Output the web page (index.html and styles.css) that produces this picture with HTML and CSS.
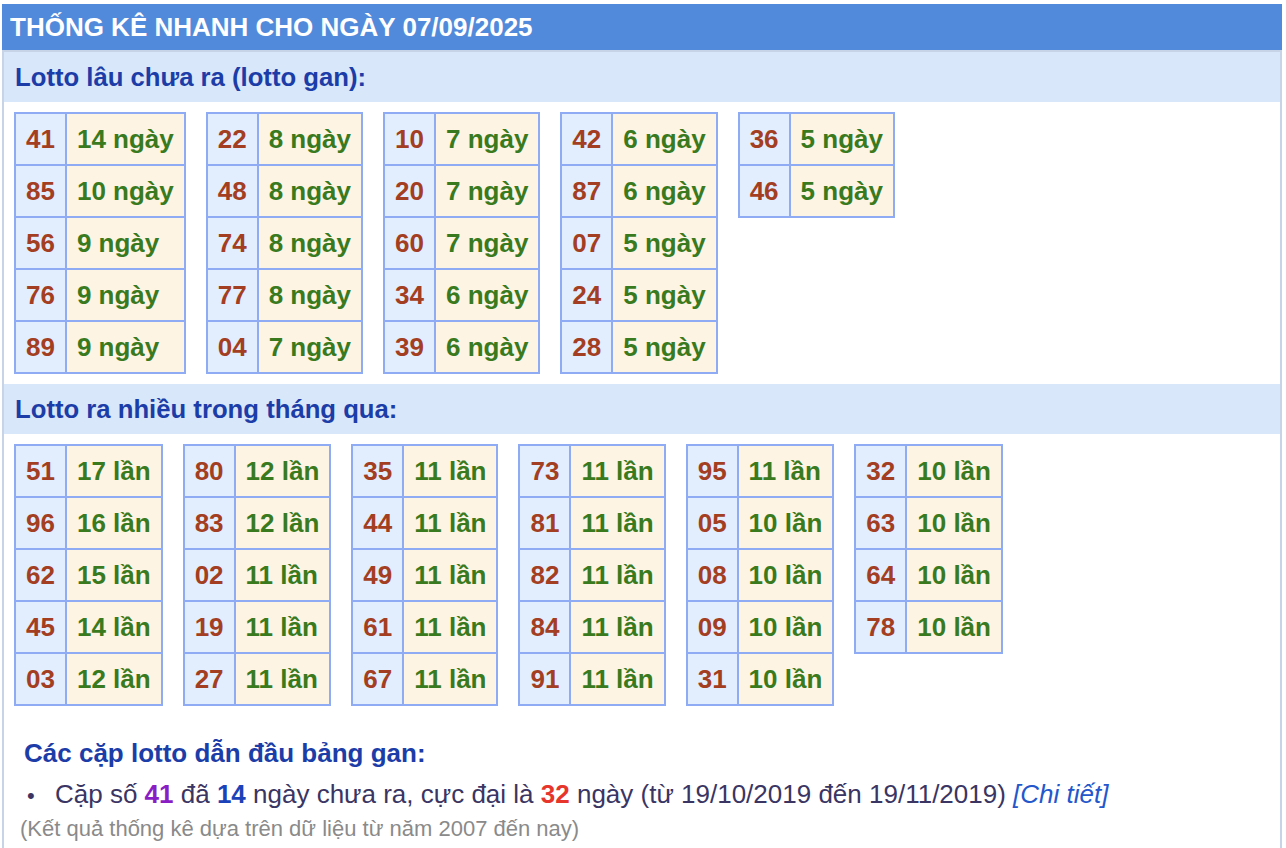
FILE: index.html
```html
<!DOCTYPE html>
<html lang="vi">
<head>
<meta charset="utf-8">
<title>Thống kê nhanh</title>
<link rel="stylesheet" href="styles.css">
</head>
<body>
<div class="wrap">
  <div class="title">THỐNG KÊ NHANH CHO NGÀY 07/09/2025</div>
  <div class="box">
    <div class="sec-head">Lotto lâu chưa ra (lotto gan):</div>
    <div class="tables">
      <table class="lt"><tr><td class="n">41</td><td class="v">14 ngày</td></tr><tr><td class="n">85</td><td class="v">10 ngày</td></tr><tr><td class="n">56</td><td class="v">9 ngày</td></tr><tr><td class="n">76</td><td class="v">9 ngày</td></tr><tr><td class="n">89</td><td class="v">9 ngày</td></tr></table>
      <table class="lt"><tr><td class="n">22</td><td class="v">8 ngày</td></tr><tr><td class="n">48</td><td class="v">8 ngày</td></tr><tr><td class="n">74</td><td class="v">8 ngày</td></tr><tr><td class="n">77</td><td class="v">8 ngày</td></tr><tr><td class="n">04</td><td class="v">7 ngày</td></tr></table>
      <table class="lt"><tr><td class="n">10</td><td class="v">7 ngày</td></tr><tr><td class="n">20</td><td class="v">7 ngày</td></tr><tr><td class="n">60</td><td class="v">7 ngày</td></tr><tr><td class="n">34</td><td class="v">6 ngày</td></tr><tr><td class="n">39</td><td class="v">6 ngày</td></tr></table>
      <table class="lt"><tr><td class="n">42</td><td class="v">6 ngày</td></tr><tr><td class="n">87</td><td class="v">6 ngày</td></tr><tr><td class="n">07</td><td class="v">5 ngày</td></tr><tr><td class="n">24</td><td class="v">5 ngày</td></tr><tr><td class="n">28</td><td class="v">5 ngày</td></tr></table>
      <table class="lt"><tr><td class="n">36</td><td class="v">5 ngày</td></tr><tr><td class="n">46</td><td class="v">5 ngày</td></tr></table>
    </div>
    <div class="sec-head">Lotto ra nhiều trong tháng qua:</div>
    <div class="tables">
      <table class="lt"><tr><td class="n">51</td><td class="v">17 lần</td></tr><tr><td class="n">96</td><td class="v">16 lần</td></tr><tr><td class="n">62</td><td class="v">15 lần</td></tr><tr><td class="n">45</td><td class="v">14 lần</td></tr><tr><td class="n">03</td><td class="v">12 lần</td></tr></table>
      <table class="lt"><tr><td class="n">80</td><td class="v">12 lần</td></tr><tr><td class="n">83</td><td class="v">12 lần</td></tr><tr><td class="n">02</td><td class="v">11 lần</td></tr><tr><td class="n">19</td><td class="v">11 lần</td></tr><tr><td class="n">27</td><td class="v">11 lần</td></tr></table>
      <table class="lt"><tr><td class="n">35</td><td class="v">11 lần</td></tr><tr><td class="n">44</td><td class="v">11 lần</td></tr><tr><td class="n">49</td><td class="v">11 lần</td></tr><tr><td class="n">61</td><td class="v">11 lần</td></tr><tr><td class="n">67</td><td class="v">11 lần</td></tr></table>
      <table class="lt"><tr><td class="n">73</td><td class="v">11 lần</td></tr><tr><td class="n">81</td><td class="v">11 lần</td></tr><tr><td class="n">82</td><td class="v">11 lần</td></tr><tr><td class="n">84</td><td class="v">11 lần</td></tr><tr><td class="n">91</td><td class="v">11 lần</td></tr></table>
      <table class="lt"><tr><td class="n">95</td><td class="v">11 lần</td></tr><tr><td class="n">05</td><td class="v">10 lần</td></tr><tr><td class="n">08</td><td class="v">10 lần</td></tr><tr><td class="n">09</td><td class="v">10 lần</td></tr><tr><td class="n">31</td><td class="v">10 lần</td></tr></table>
      <table class="lt"><tr><td class="n">32</td><td class="v">10 lần</td></tr><tr><td class="n">63</td><td class="v">10 lần</td></tr><tr><td class="n">64</td><td class="v">10 lần</td></tr><tr><td class="n">78</td><td class="v">10 lần</td></tr></table>
    </div>
    <div class="pairs">
      <div class="pairs-head">Các cặp lotto dẫn đầu bảng gan:</div>
      <ul class="pairs-list">
        <li>Cặp số <b class="c-purple">41</b> đã <b class="c-blue">14</b> ngày chưa ra, cực đại là <b class="c-red">32</b> ngày (từ 19/10/2019 đến 19/11/2019) <a class="detail" href="#">[Chi tiết]</a></li>
      </ul>
    </div>
    <div class="note">(Kết quả thống kê dựa trên dữ liệu từ năm 2007 đến nay)</div>
  </div>
</div>
</body>
</html>
```
FILE: styles.css
```css
html, body {
  margin: 0;
  padding: 0;
  background: #fff;
  font-family: "Liberation Sans", Arial, sans-serif;
}
.wrap {
  margin: 4px 4px 0 2px;
  min-height: 844px;
  display: flex;
  flex-direction: column;
}
.title {
  background: #528adb;
  color: #fff;
  font-weight: bold;
  font-size: 26px;
  height: 46px;
  line-height: 46px;
  padding-left: 8px;
}
.box {
  flex: 1;
  border: 2px solid #c7d4e7;
  border-bottom: none;
}
.sec-head {
  background: #d9e7fa;
  color: #1c3da8;
  font-weight: bold;
  font-size: 25.7px;
  height: 50px;
  line-height: 50px;
  padding-left: 11px;
}
.tables {
  display: flex;
  align-items: flex-start;
  gap: 20px;
  padding: 10px;
}
.lt {
  border-collapse: collapse;
  font-weight: bold;
  font-size: 26px;
}
.lt td {
  border: 2px solid #8eabf4;
  height: 50px;
  padding: 0 10px;
  line-height: 50px;
  white-space: nowrap;
}
.lt td.n {
  background: #e2eefd;
  color: #a33e22;
  text-align: center;
}
.lt td.v {
  background: #fdf4e4;
  color: #3a7a1e;
  text-align: left;
}
.pairs {
  padding: 22px 0 0 20px;
}
.pairs-head {
  color: #1c3da8;
  font-weight: bold;
  font-size: 26px;
  line-height: 30px;
}
.pairs-list {
  list-style: none;
  margin: 11px 0 0 0;
  padding-left: 3px;
  color: #3a3562;
  font-size: 26px;
  line-height: 30px;
}
.pairs-list li::before {
  content: "\2022";
  display: inline-block;
  width: 28px;
  font-size: 22px;
  color: #3a3562;
}
.c-purple { color: #8a1ec4; }
.c-blue { color: #1b42b9; }
.c-red { color: #e8352b; }
.detail {
  color: #2457cc;
  font-style: italic;
  text-decoration: none;
}
.note {
  color: #8a8a8a;
  font-size: 22px;
  line-height: 26px;
  padding: 5px 0 0 16px;
}
```
